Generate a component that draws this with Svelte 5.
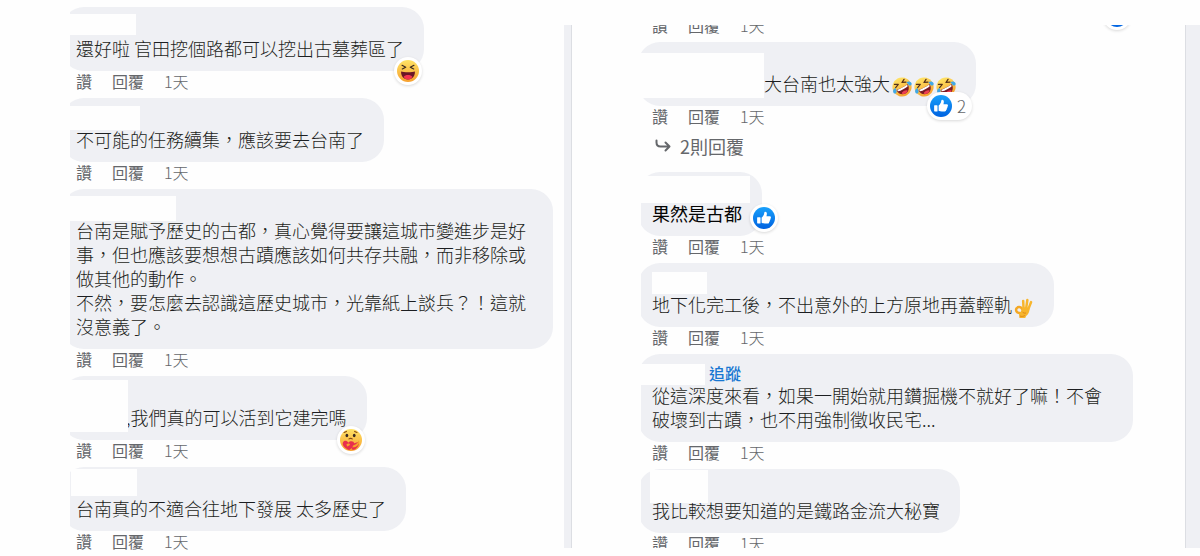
<script>
	const left = [
		{
			lines: ['還好啦 官田挖個路都可以挖出古墓葬區了'],
			cover: { x: 0, y: 7, w: 74, h: 21 },
			reaction: 'haha'
		},
		{
			lines: ['不可能的任務續集，應該要去台南了'],
			cover: { x: 0, y: 8, w: 78, h: 24 }
		},
		{
			lines: [
				'台南是賦予歷史的古都，真心覺得要讓這城市變進步是好事，但也應該要想想古蹟應該如何共存共融，而非移除或做其他的動作。',
				'不然，要怎麼去認識這歷史城市，光靠紙上談兵？！這就沒意義了。'
			],
			cover: { x: 0, y: 7, w: 114, h: 25 }
		},
		{
			lines: [',我們真的可以活到它建完嗎'],
			mention: 50,
			cover: { x: 0, y: 4, w: 66, h: 52 },
			reaction: 'care'
		},
		{
			lines: ['台南真的不適合往地下發展 太多歷史了'],
			cover: { x: 9, y: 2, w: 66, h: 27 }
		}
	];

	const right = [
		{
			lines: ['大台南也太強大'],
			mention: 112,
			emoji: ['rofl', 'rofl', 'rofl'],
			cover: { x: 0, y: 11, w: 126, h: 45 },
			reaction: 'like',
			count: 2,
			replies: 2
		},
		{
			lines: ['果然是古都'],
			strong: true,
			cover: { x: 0, y: 4, w: 112, h: 27 },
			reaction: 'like',
			beside: true
		},
		{
			lines: ['地下化完工後，不出意外的上方原地再蓋輕軌'],
			emoji: ['ok'],
			cover: { x: 14, y: 9, w: 55, h: 22 }
		},
		{
			lines: ['從這深度來看，如果一開始就用鑽掘機不就好了嘛！不會破壞到古蹟，也不用強制徵收民宅...'],
			follow: true,
			cover: { x: 0, y: 10, w: 67, h: 21 }
		},
		{
			lines: ['我比較想要知道的是鐵路金流大秘寶'],
			cover: { x: 12, y: 1, w: 58, h: 33 }
		}
	];
</script>

<svelte:head>
	<title>留言</title>
</svelte:head>

{#snippet icon(name)}
	<svg class="icon" viewBox="0 0 24 24" aria-hidden="true">
		{#if name === 'like'}
			<circle cx="12" cy="12" r="12" fill="url(#blue)" />
			<path
				d="M5 11.2h2.6c.4 0 .6.2.6.6v5.600c0 .4-.2.6-.6.6H5.200c-.4 0-.7-.3-.7-.7v-5.500c0-.3.2-.6.5-.6zM9.400 11.500c1.500-1.300 2.600-2.800 2.800-4.700.1-.9.500-1.500 1.200-1.500 1.300 0 1.900 1.300 1.700 2.700l-.4 2.200h3.300c1 0 1.600.6 1.600 1.400 0 .6-.3 1-.7 1.200.3.8 0 1.600-.6 1.900.2.7-.1 1.400-.7 1.700.1 1-.5 1.600-1.600 1.600h-3c-1.400 0-2.500-.3-3.600-.9z"
				fill="#fff"
			/>
		{:else if name === 'haha'}
			<circle cx="12" cy="12" r="12" fill="url(#yellow)" />
			<path d="M4.500 12.500c2.500 1 12.500 1 15 0 .5 4-2.500 8.800-7.500 8.800s-8-4.800-7.500-8.800z" fill="#6b1626" />
			<path d="M7.200 18.500c1.600-2.700 8-2.700 9.600 0-1.300 1.800-3 2.800-4.800 2.800s-3.500-1-4.800-2.800z" fill="#f3344f" />
			<path
				d="M5.500 5.800 9.500 8 5.800 9.800M18.500 5.800 14.500 8l3.700 1.800"
				fill="none"
				stroke="#3a2a20"
				stroke-width="1.300"
				stroke-linecap="round"
				stroke-linejoin="round"
			/>
		{:else if name === 'care'}
			<circle cx="12" cy="12" r="12" fill="url(#yellow)" />
			<ellipse cx="7.500" cy="7" rx="1.500" ry="1.900" fill="#3a2a20" />
			<ellipse cx="15.500" cy="7" rx="1.500" ry="1.900" fill="#3a2a20" />
			<path
				d="M4.500 3.800 7 2.600M16 2.600l2.500 1.200M9.800 10.800q1.800-1.200 3.600 0"
				fill="none"
				stroke="#8a4a12"
				stroke-width="1.200"
				stroke-linecap="round"
			/>
			<path
				d="M10 23c-4.500-2-8-5-6.800-8.300 1-2.400 4.200-2.400 5.800.2 2.200-2.300 6.500-2 6.500 1.200 0 3-3 5.300-5.500 6.900z"
				fill="#e8304d"
			/>
			<path d="M9.500 18.500c1-1.300 3-2 5-2.500 3-.8 4.500-2 6-2 1 2.500-1 7-5 8.500-3 .8-3.500-1-1.500-2.200" fill="#e8304d" />
			<path d="M7 16.500c1.500-1.200 3.600-1 3.800.2s-1.300 1.800-3 2.300" fill="#f6a32c" />
			<path d="M20.500 12.500c1.500 3-1 6.500-5 7.500-2 .3-2.300-1.700-.6-2.400 2.600-.9 4.500-2.600 5.600-5.100z" fill="#f6a32c" />
		{:else if name === 'rofl'}
			<g transform="rotate(-28 12 12)">
				<circle cx="12" cy="12" r="11.500" fill="url(#yellow)" />
				<path d="M4.500 12c3 1 12 1 15 0 .5 4.500-2.500 9-7.500 9s-8-4.500-7.500-9z" fill="#7b1a24" />
				<path d="M5.200 12.300c3 .8 10.600.8 13.600 0l-.3 2c-3 1-10 1-13 0z" fill="#fff" />
				<path d="M8 18.700c1.500-2 6.500-2 8 0-1 1.500-2.500 2.300-4 2.300s-3-.8-4-2.300z" fill="#ef3f52" />
				<path
					d="M5.500 5 9.500 7.200 5 9M18.500 5l-4 2.200L19 9"
					fill="none"
					stroke="#54301a"
					stroke-width="1.500"
					stroke-linecap="round"
					stroke-linejoin="round"
				/>
				<path d="M4.500 9.500C2 9-.5 11-.2 13.500c.3 2.200 3.300 2.200 4 0zM19.500 9.500c2.500-.5 5 1.500 4.700 4-.3 2.200-3.300 2.200-4 0z" fill="#3fa9e8" />
			</g>
		{:else if name === 'ok'}
			<g fill="none" stroke-linecap="round" stroke-linejoin="round">
				<path d="M11.500 13 11 3.500M14.500 13 16 2.500M17 14 20.500 5" stroke="#f7b52c" stroke-width="3" />
				<path d="M9.500 13c-1-2.500-5-3-6.500-.5-1.500 3 1 6 4 5.500" stroke="#f4a825" stroke-width="3" />
			</g>
			<path d="M9.500 12c3-1.500 7-1 9 1 .3 4-1.500 7-4 8.500L13.500 24H6.500l-.5-5c1-1 2-2 2.500-3.500z" fill="#f7b52c" />
			<path d="M10 16.500c1 1.500 2.500 2 4.500 1.500M7 21.500c2 1 4.500.6 6-.5" fill="none" stroke="#d98014" stroke-width="1" />
		{/if}
	</svg>
{/snippet}

{#snippet actions()}
	<div class="actions">
		<button type="button">讚</button>
		<button type="button">回覆</button>
		<a href="#time">1天</a>
	</div>
{/snippet}

{#snippet comment(c)}
	<li>
		<div class="bubble">
			<div class="name">
				{#if c.follow}<button type="button" class="follow">追蹤</button>{/if}
			</div>
			<div class="text" class:strong={c.strong}>
				{#each c.lines as line, i}
					<p>
						{#if c.mention && i === 0}<span class="mention" style="width: {c.mention}px"></span
							>{/if}{line}{#each c.emoji ?? [] as e}<span class="emoji">{@render icon(e)}</span>{/each}
					</p>
				{/each}
			</div>
			<span
				class="cover"
				style="left: {c.cover.x}px; top: {c.cover.y}px; width: {c.cover.w}px; height: {c.cover.h}px"
			></span>
			{#if c.reaction}
				<button type="button" class="badge" class:beside={c.beside} class:counted={c.count} aria-label="心情">
					{@render icon(c.reaction)}
					{#if c.count}<span>{c.count}</span>{/if}
				</button>
			{/if}
		</div>
		{@render actions()}
		{#if c.replies}
			<button type="button" class="replies">
				<svg viewBox="0 0 16 16" aria-hidden="true">
					<path d="M1.500 2.500v2c0 2.500 1.500 4 4 4H14M10.500 4.500l4 4-4 4" />
				</svg>
				{c.replies}則回覆
			</button>
		{/if}
	</li>
{/snippet}

<svg class="defs" width="0" height="0" aria-hidden="true">
	<defs>
		<linearGradient id="blue" x1="0" y1="0" x2="0" y2="1">
			<stop offset="0" stop-color="#18a0fb" />
			<stop offset="1" stop-color="#0062e0" />
		</linearGradient>
		<linearGradient id="yellow" x1="0" y1="0" x2="0" y2="1">
			<stop offset="0" stop-color="#ffe365" />
			<stop offset="1" stop-color="#f6a02e" />
		</linearGradient>
	</defs>
</svg>

<main lang="zh-TW">
	<ul class="thread first">
		{#each left as c}{@render comment(c)}{/each}
	</ul>
	<div class="gutter"></div>
	<ul class="thread second">
		<li class="previous">
			{@render actions()}
			<span class="badge">{@render icon('like')}</span>
		</li>
		{#each right as c}{@render comment(c)}{/each}
	</ul>
	<div class="gutter edge"></div>
</main>

<style>
	:global(body) {
		margin: 0;
		background: #fefefe;
	}

	.defs {
		position: absolute;
	}

	main {
		display: flex;
		font-family: 'Noto Sans CJK TC', 'Noto Sans', sans-serif;
		color: #1c1e21;
	}

	button {
		padding: 0;
		border: 0;
		background: none;
		font: inherit;
		color: inherit;
		cursor: pointer;
	}

	.thread {
		box-sizing: border-box;
		margin: 0;
		padding: 0;
		list-style: none;
		overflow: hidden;
		display: flex;
		flex-direction: column;
	}

	.first {
		flex: 483;
		margin: 7px 11px 0 70px;
		--cut: 8px;
	}

	.first li:last-child {
		margin-bottom: -2px;
	}

	.second {
		flex: 492;
		margin: 25px 52px 8px 69px;
		--cut: 3px;
	}

	.second li:last-child {
		margin-bottom: -13px;
	}

	li {
		padding-left: 14px;
		margin-left: calc(-1 * var(--cut));
	}

	.previous {
		position: relative;
		margin-top: -10px;
	}

	.previous .badge {
		right: 2px;
		bottom: 12px;
	}

	.gutter {
		width: 7px;
		margin: 25px 0 8px;
		background: #eff0f4;
		border-right: 1px solid #dcdee3;
	}

	.edge {
		width: 14px;
		border-right: 0;
		border-left: 1px solid #dcdee3;
	}

	.bubble {
		position: relative;
		width: fit-content;
		margin-left: -14px;
		padding: 0 20px 11px 14px;
		border-radius: 22px;
		background: #eff0f4;
	}

	.name {
		display: flex;
		align-items: flex-end;
		height: 29px;
	}

	.follow {
		margin-left: 57px;
		font-size: 16px;
		font-weight: 500;
		line-height: 20px;
		color: #1877d2;
	}

	.text {
		font-size: 18px;
		font-weight: 300;
		line-height: 24px;
	}

	.text.strong {
		font-weight: 400;
		color: #050505;
	}

	.text p {
		margin: 0;
	}

	.mention {
		display: inline-block;
	}

	.emoji {
		display: inline-block;
		width: 20px;
		height: 20px;
		margin: -2px 0 -2px 2px;
		vertical-align: -4px;
	}

	.icon {
		display: block;
		width: 100%;
		height: 100%;
	}

	.cover {
		position: absolute;
		background: #fefefe;
	}

	.badge {
		position: absolute;
		right: 2px;
		bottom: -14px;
		box-sizing: border-box;
		height: 28px;
		min-width: 28px;
		padding: 3px;
		display: flex;
		align-items: center;
		gap: 5px;
		border-radius: 14px;
		background: #fff;
		box-shadow: 0 1px 3px rgba(0, 0, 0, 0.15);
		font-size: 17px;
		font-weight: 300;
		line-height: 22px;
		color: #65676b;
		z-index: 1;
	}

	.badge .icon {
		width: 22px;
		height: 22px;
	}

	.badge.counted {
		right: 4px;
		padding-right: 6px;
	}

	.badge.beside {
		right: -16px;
		bottom: 4px;
	}

	.actions {
		display: flex;
		gap: 20px;
		height: 27px;
		font-size: 16px;
		line-height: 21px;
		color: #65676b;
	}

	.actions button {
		height: 21px;
		font-weight: 400;
	}

	.actions a {
		font-weight: 300;
		color: inherit;
		text-decoration: none;
	}

	.replies {
		display: flex;
		align-items: center;
		gap: 9px;
		height: 26px;
		margin: 0 0 13px 3px;
		font-size: 18px;
		font-weight: 400;
		color: #65676b;
	}

	.replies svg {
		width: 16px;
		height: 16px;
		fill: none;
		stroke: #65676b;
		stroke-width: 2;
		stroke-linecap: round;
		stroke-linejoin: round;
	}
</style>
